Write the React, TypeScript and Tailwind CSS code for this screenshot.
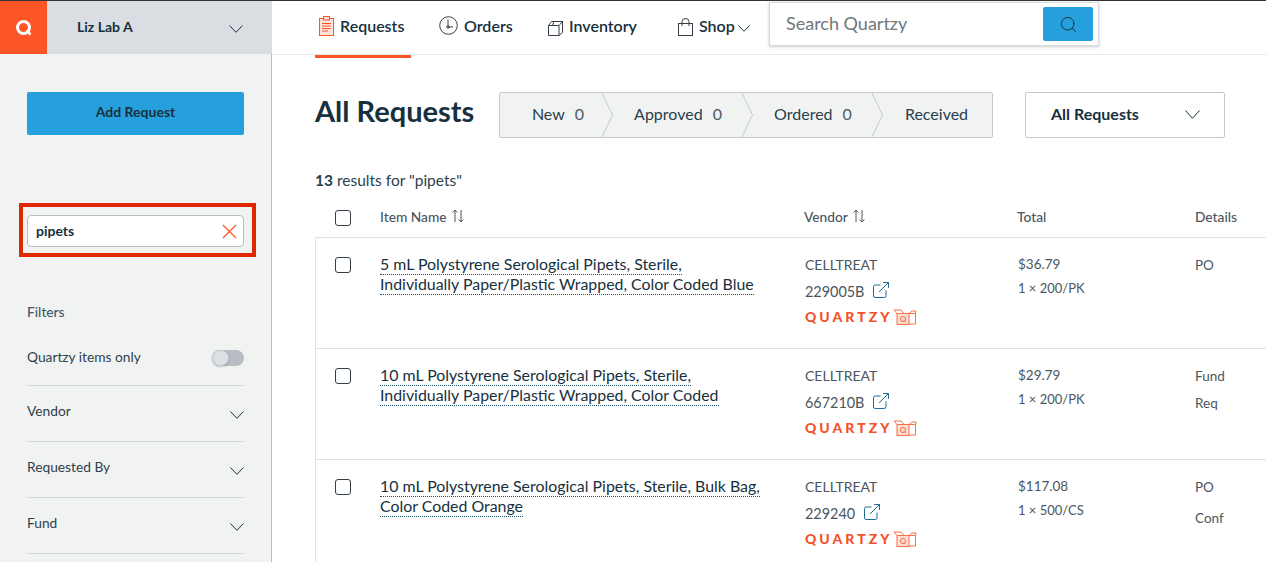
import React from "react";
import { Search, ExternalLink } from "lucide-react";

type Row = {
  top: number;
  line1: string;
  line2: string;
  vendor: string;
  sku: string;
  price: string;
  size: string;
  details: string[];
};

const rows: Row[] = [
  {
    top: 0,
    line1: "5 mL Polystyrene Serological Pipets, Sterile,",
    line2: "Individually Paper/Plastic Wrapped, Color Coded Blue",
    vendor: "CELLTREAT",
    sku: "229005B",
    price: "$36.79",
    size: "1 × 200/PK",
    details: ["PO"],
  },
  {
    top: 1,
    line1: "10 mL Polystyrene Serological Pipets, Sterile,",
    line2: "Individually Paper/Plastic Wrapped, Color Coded",
    vendor: "CELLTREAT",
    sku: "667210B",
    price: "$29.79",
    size: "1 × 200/PK",
    details: ["Fund", "Req"],
  },
  {
    top: 2,
    line1: "10 mL Polystyrene Serological Pipets, Sterile, Bulk Bag,",
    line2: "Color Coded Orange",
    vendor: "CELLTREAT",
    sku: "229240",
    price: "$117.08",
    size: "1 × 500/CS",
    details: ["PO", "Conf"],
  },
];

function Chevron({ width, height, className }: { width: number; height: number; className?: string }) {
  return (
    <svg width={width} height={height} viewBox={`0 0 ${width} ${height}`} fill="none" stroke="#17303d" strokeWidth="1" className={className}>
      <path d={`M0.5 0.5 ${width / 2} ${height - 0.7} ${width - 0.5} 0.5`} />
    </svg>
  );
}

function ClipboardIcon() {
  return (
    <svg width="15" height="20" viewBox="0 0 15 20" fill="none" stroke="#fb5528" strokeWidth="1">
      <rect x="0.5" y="2.5" width="14" height="17" fill="#fde3da" />
      <rect x="4.5" y="0.5" width="6" height="3.5" fill="#fde3da" />
      <path d="M3 7.5h9M3 10h9M3 12.5h9M3 15h6" />
    </svg>
  );
}

function ClockIcon() {
  return (
    <svg width="19" height="19" viewBox="0 0 19 19" fill="none" stroke="#333e48" strokeWidth="1" className="relative top-[-1px]">
      <circle cx="9.5" cy="9.5" r="8.8" />
      <path d="M9 3.5v7.5h5" />
      <circle cx="9" cy="11" r="1.2" />
    </svg>
  );
}

function BoxIcon() {
  return (
    <svg width="15" height="15" viewBox="0 0 15 15" fill="none" stroke="#333e48" strokeWidth="1" className="relative top-[2px]">
      <path d="M0.5 4.5h10.5v10H0.5zM0.5 4.5 3.5 0.5h11l-3.5 4M11 14.5l3.5-3V0.5M6 0.5 4.5 4.5" />
    </svg>
  );
}

function BagIcon() {
  return (
    <svg width="15" height="18" viewBox="0 0 15 18" fill="none" stroke="#333e48" strokeWidth="1" className="relative top-[1px]">
      <rect x="0.5" y="5.5" width="14" height="12" />
      <path d="M4 8V3.5a3.5 3 0 0 1 7 0V8" />
    </svg>
  );
}

function CartonIcon() {
  return (
    <svg width="24" height="17" viewBox="0 0 24 17" fill="none" stroke="#f7714a" strokeWidth="1" className="ml-[1px] mt-[1px]">
      <path d="M1 1h7l3 3.5H4z" />
      <rect x="4" y="4.5" width="12" height="11" fill="#fddcd1" />
      <path d="M16 4.5h6.5V15H16M16 4.5l3-2.5h4l-.5 2.5" />
      <circle cx="10" cy="10" r="2.6" />
      <path d="m11 11.5 1.8 1.8" />
    </svg>
  );
}

function SortIcon() {
  return (
    <svg width="12" height="14" viewBox="0 0 12 14" fill="none" stroke="#4a5660" strokeWidth="1" className="relative top-[-2px]">
      <path d="M3 13V1M0.7 3.5 3 1l2.3 2.5M9 1v12M6.7 10.5 9 13l2.3-2.5" />
    </svg>
  );
}

function Checkbox() {
  return <div className="w-4 h-4 border border-[#333e48] rounded-[3px] bg-white shrink-0" />;
}

function NavItem({ icon, label, active, className }: { icon: React.ReactNode; label: string; active?: boolean; className: string }) {
  return (
    <div className={`relative h-[54px] flex items-center gap-[6px] pb-[3px] ${className}`}>
      {icon}
      <span className="text-[16px] font-semibold text-[#17303d]">{label}</span>
      {active && <div className="absolute left-0 right-0 top-[54px] h-[3px] bg-[#fb5528]" />}
    </div>
  );
}

function Step({ label, count, width }: { label: string; count?: string; width: string }) {
  return (
    <div className={`relative h-full flex items-center justify-center pb-[3px] text-[16px] text-[#2a3f4b] ${width}`}>
      <span>{label}</span>
      {count && <span className="ml-[10px] text-[#4a5a64]">{count}</span>}
    </div>
  );
}

function StepChevron() {
  return (
    <svg width="12" height="46" viewBox="0 0 12 46" fill="none" stroke="#c3c9ce" className="absolute top-[-1px] right-[-12px] z-10">
      <path d="M0.5 0 11.5 23 0.5 46" fill="#f1f3f3" />
    </svg>
  );
}

function FilterRow({ label }: { label: string }) {
  return (
    <div className="h-[56px] border-t border-[#d3d7da] flex items-center justify-between text-[13.75px] text-[#2f3f49]">
      <span className="relative top-[-2px]">{label}</span>
      <Chevron width={14} height={8} className="mt-[2px]" />
    </div>
  );
}

function ResultRow({ row }: { row: Row }) {
  return (
    <div className="h-[111px] border-t border-[#dfe2e4] flex">
      <div className="w-[64px] pl-[19px] pt-[19px] shrink-0">
        <Checkbox />
      </div>
      <div className="w-[425px] shrink-0 pt-[16px] text-[15.9px] leading-[20px] text-[#17303d]">
        <div className="w-fit border-b border-dotted border-[#17506b] h-[21px]">{row.line1}</div>
        <div className="w-fit border-b border-dotted border-[#17506b] h-[21px] mt-[-1px]">{row.line2}</div>
      </div>
      <div className="w-[213px] shrink-0 pt-[17px] text-[14px] text-[#4a5660] leading-[20px]">
        <div>{row.vendor}</div>
        <div className="flex items-center gap-[7px] mt-[7px] text-[14.4px]">
          {row.sku}
          <ExternalLink size={20} strokeWidth={1.2} className="text-[#1b6c8e] relative top-[-2px]" />
        </div>
        <div className="flex items-center mt-[5px] h-[20px]">
          <span className="text-[14px] font-black tracking-[3px] text-[#f4532a]">QUARTZY</span>
          <CartonIcon />
        </div>
      </div>
      <div className="w-[177px] shrink-0 pt-[16px] text-[13.5px] text-[#4a5660] leading-[20px]">
        <div>{row.price}</div>
        <div className="mt-[4px] text-[13px]">{row.size}</div>
      </div>
      <div className="pt-[17px] text-[13.5px] text-[#4a5660] leading-[20px] flex flex-col gap-[7px]">
        {row.details.map((d) => (
          <div key={d} className={d === "Conf" ? "mt-[4px]" : ""}>
            {d}
          </div>
        ))}
      </div>
    </div>
  );
}

export default function App() {
  return (
    <div className="w-[1266px] h-[562px] overflow-hidden bg-white font-['Lato','Liberation_Sans',sans-serif] border-t border-[#333]">
      <div className="flex h-[561px]">
        <aside className="w-[272px] shrink-0 bg-[#f1f3f3] border-r border-[#b9bfc4] flex flex-col">
          <div className="h-[53px] flex bg-[#dadde2] shrink-0 mr-[-1px]">
            <div className="w-[47px] bg-[#fb5528] flex items-center justify-center">
              <svg width="18" height="18" viewBox="0 0 18 18" fill="none" stroke="#fff" strokeWidth="3">
                <circle cx="8.5" cy="8.5" r="6" />
                <path d="m11.5 11.5 4 4" strokeWidth="2.5" />
              </svg>
            </div>
            <div className="flex-1 flex items-center justify-between pl-[30px] pr-[29px]">
              <span className="text-[14px] font-bold text-[#17303d] pb-[2px]">Liz Lab A</span>
              <Chevron width={14} height={8} className="mt-[3px]" />
            </div>
          </div>
          <div className="px-[27px] pt-[38px]">
            <button className="w-full h-[43px] rounded-[2px] bg-[#25a0dd] text-[14px] font-bold text-[#17303d] pb-[4px]">Add Request</button>
          </div>
          <div className="ml-[19px] mr-[15px] mt-[68px] h-[54px] border-4 border-[#e02800] pl-[4px] pr-[8px] pt-[2px] flex items-center">
            <div className="w-full h-[32px] bg-white border border-[#b9bfc4] rounded-[4px] flex items-center justify-between pl-2 pr-[6px]">
              <span className="text-[14px] font-bold text-[#17303d] pb-[1px]">pipets</span>
              <svg width="15" height="15" viewBox="0 0 15 15" fill="none" stroke="#fb5528" strokeWidth="1.2">
                <path d="m1 1 13 13M14 1 1 14" />
              </svg>
            </div>
          </div>
          <div className="px-[27px] pt-[46px]">
            <div className="text-[13.75px] font-medium text-[#4a5660] leading-[17px]">Filters</div>
            <div className="flex items-center justify-between h-[56px] mt-[9px] text-[13.75px] text-[#2f3f49]">
              <span>Quartzy items only</span>
              <div className="w-8 h-4 rounded-full bg-[#b7bdc3] relative top-[1px]">
                <div className="absolute left-0 top-0 w-[17px] h-4 rounded-full bg-[#dcdfe3] border border-[#c8ccd0] shadow-[0_1px_2px_rgba(0,0,0,0.2)]" />
              </div>
            </div>
            <FilterRow label="Vendor" />
            <FilterRow label="Requested By" />
            <FilterRow label="Fund" />
            <div className="border-t border-[#d3d7da]" />
          </div>
        </aside>

        <main className="flex-1 min-w-0">
          <header className="relative h-[54px] border-b border-[#e8eaeb] flex items-center pl-[43px]">
            <NavItem icon={<ClipboardIcon />} label="Requests" active className="w-[96px] pl-[4px]" />
            <NavItem icon={<ClockIcon />} label="Orders" className="ml-[28px] w-[109px]" />
            <NavItem icon={<BoxIcon />} label="Inventory" className="w-[130px]" />
            <div className="h-[54px] flex items-center gap-[6px] pb-[3px]">
              <BagIcon />
              <span className="text-[16px] font-semibold text-[#17303d]">Shop</span>
              <Chevron width={12} height={7} className="ml-[-3px] mt-[4px]" />
            </div>
            <div className="absolute left-[497px] top-[1px] w-[330px] h-[44px] bg-white border border-[#d6d9dd] shadow-[0_1px_3px_rgba(0,0,0,0.2)] flex items-center justify-between pl-[16px] pr-[5px]">
              <span className="text-[18px] text-[#70767b] pb-[2px]">Search Quartzy</span>
              <div className="w-[50px] h-[34px] bg-[#25a0dd] rounded-[2px] flex items-center justify-center">
                <Search size={19} strokeWidth={1.2} className="text-[#17303d]" />
              </div>
            </div>
          </header>

          <div className="pl-[43px] pt-[37px] flex items-start">
            <h1 className="w-[184px] text-[29px] leading-[38px] font-bold text-[#17303d]">All Requests</h1>
            <div className="w-[494px] h-[46px] bg-[#f1f3f3] border border-[#c3c9ce] rounded-[2px] flex">
              <div className="relative w-[101px] h-full">
                <Step label="New" count="0" width="w-full pl-[15px]" />
                <StepChevron />
              </div>
              <div className="relative w-[140px] h-full">
                <Step label="Approved" count="0" width="w-full pl-[14px]" />
                <StepChevron />
              </div>
              <div className="relative w-[130px] h-full">
                <Step label="Ordered" count="0" width="w-full pl-[14px]" />
                <StepChevron />
              </div>
              <Step label="Received" width="flex-1 pl-[10px]" />
            </div>
            <div className="ml-[32px] w-[200px] h-[46px] border border-[#c3c9ce] rounded-[2px] flex items-center justify-between pl-[25px] pr-[24px]">
              <span className="text-[16px] font-bold text-[#17303d] pb-[2px]">All Requests</span>
              <Chevron width={15} height={9} className="mb-[1px]" />
            </div>
          </div>

          <div className="pl-[43px] mt-[32px] text-[15.5px] leading-[20px] text-[#2a3f4b]">
            <span className="font-bold">13</span> results for "pipets"
          </div>

          <div className="ml-[43px] mt-[8px]">
            <div className="h-[39px] flex items-center text-[13.75px] font-medium text-[#4a5660]">
              <div className="w-[65px] pl-[20px] shrink-0">
                <Checkbox />
              </div>
              <div className="w-[424px] shrink-0 flex items-center gap-[5px]">
                Item Name <SortIcon />
              </div>
              <div className="w-[213px] shrink-0 flex items-center gap-[5px]">
                Vendor <SortIcon />
              </div>
              <div className="w-[178px] shrink-0">Total</div>
              <div>Details</div>
            </div>
            <div className="border-l border-[#dfe2e4]">
              {rows.map((row) => (
                <ResultRow key={row.top} row={row} />
              ))}
            </div>
          </div>
        </main>
      </div>
    </div>
  );
}
